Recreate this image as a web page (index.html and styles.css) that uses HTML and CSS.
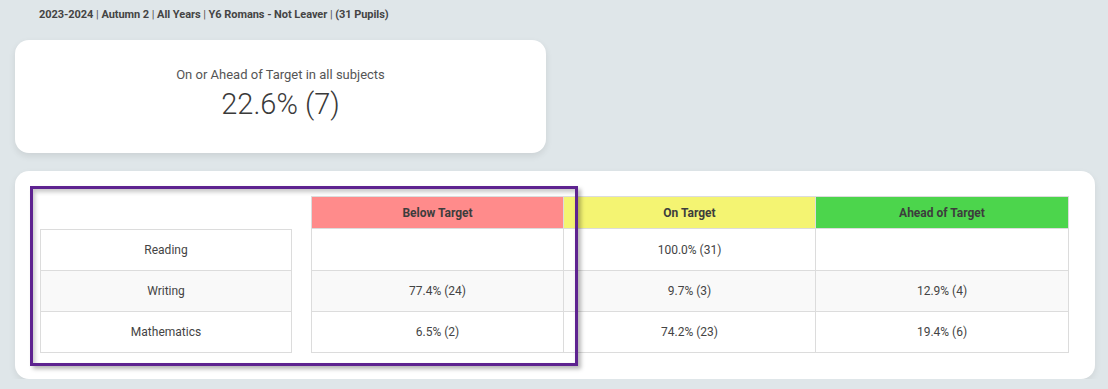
FILE: index.html
```html
<!DOCTYPE html>
<html>
<head>
<meta charset="utf-8">
<link rel="stylesheet" href="styles.css">
</head>
<body>
<div class="page">
  <div class="crumbs"><b>2023-2024</b> | <b>Autumn 2</b> | <b>All Years</b> | <b>Y6 Romans - Not Leaver</b> | <b>(31 Pupils)</b></div>
  <div class="summary">
    <div class="summary-label">On or Ahead of Target in all subjects</div>
    <div class="summary-value">22.6% (7)</div>
  </div>
  <div class="results">
    <div class="subjects">
      <div class="subj-head"></div>
      <div class="subj-cell">Reading</div>
      <div class="subj-cell alt">Writing</div>
      <div class="subj-cell">Mathematics</div>
    </div>
    <div class="grid">
      <div class="hcell below">Below Target</div>
      <div class="hcell on">On Target</div>
      <div class="hcell ahead">Ahead of Target</div>
      <div class="cell"></div>
      <div class="cell">100.0% (31)</div>
      <div class="cell"></div>
      <div class="cell alt">77.4% (24)</div>
      <div class="cell alt">9.7% (3)</div>
      <div class="cell alt">12.9% (4)</div>
      <div class="cell">6.5% (2)</div>
      <div class="cell">74.2% (23)</div>
      <div class="cell">19.4% (6)</div>
    </div>
    <div class="highlight"></div>
  </div>
</div>
</body>
</html>
```
FILE: styles.css
```css
html, body {
  margin: 0;
  padding: 0;
  background: #dfe6e9;
  font-family: Roboto, "Liberation Sans", Arial, sans-serif;
  color: #333;
}
.page {
  padding: 7px 13px 0 15px;
  width: 1080px;
}
.crumbs {
  font-size: 11px;
  line-height: 15px;
  color: #555;
  padding-left: 24px;
  letter-spacing: -0.05px;
}
.crumbs b {
  color: #444;
  font-weight: 700;
}
.summary {
  margin-top: 18px;
  width: 531px;
  height: 113px;
  box-sizing: border-box;
  background: #fff;
  border-radius: 14px;
  box-shadow: 0 3px 7px rgba(0, 0, 0, 0.09);
  text-align: center;
  padding-top: 27px;
}
.summary-label {
  font-size: 13px;
  line-height: 16px;
  color: #555;
}
.summary-value {
  font-size: 29px;
  line-height: 34px;
  font-weight: 300;
  color: #3a3a3a;
  margin-top: 4px;
}
.results {
  position: relative;
  margin-top: 18px;
  width: 1080px;
  height: 208px;
  box-sizing: border-box;
  background: #fff;
  border-radius: 14px;
  box-shadow: 0 3px 7px rgba(0, 0, 0, 0.08);
  padding: 25px 26px 0 25px;
  display: flex;
  gap: 19px;
}
.subjects {
  width: 252px;
  display: flex;
  flex-direction: column;
}
.subj-head {
  height: 33px;
}
.subj-cell, .cell {
  box-sizing: border-box;
  display: flex;
  align-items: center;
  justify-content: center;
  font-size: 12px;
  color: #444;
  border: 1px solid #dcdcdc;
  margin-top: -1px;
  background: #fff;
}
.subj-cell {
  height: 42px;
}
.subj-head + .subj-cell {
  margin-top: 0;
}
.alt {
  background: #f9f9f9;
}
.grid {
  width: 758px;
  display: grid;
  grid-template-columns: 253px 252px 253px;
  grid-template-rows: 33px 42px 41px 41px;
}
.grid .cell {
  margin-left: -1px;
}
.grid .cell:nth-child(3n+1) {
  margin-left: 0;
}
.hcell {
  display: flex;
  align-items: center;
  justify-content: center;
  font-size: 12px;
  font-weight: 700;
  color: #3d3d3d;
  border: 1px solid #dcdcdc;
  border-bottom: none;
  margin-left: -1px;
}
.hcell.below {
  margin-left: 0;
  background: #ff8b8b;
}
.hcell.on {
  background: #f4f472;
}
.hcell.ahead {
  background: #4cd54c;
}
.highlight {
  position: absolute;
  left: 15px;
  top: 15px;
  width: 548px;
  height: 180px;
  box-sizing: border-box;
  border: 3px solid #5e2390;
  box-shadow: 3px 3px 4px rgba(0, 0, 0, 0.28), inset 2px 3px 4px rgba(0, 0, 0, 0.22);
  pointer-events: none;
}
```
